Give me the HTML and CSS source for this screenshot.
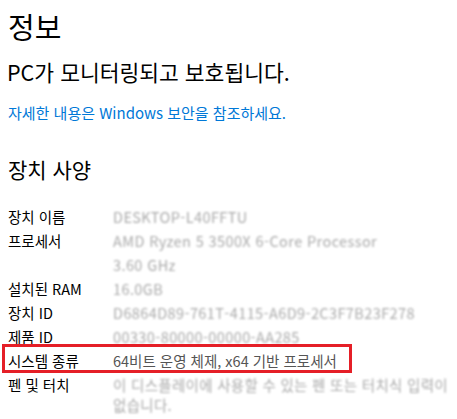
FILE: index.html
```html
<!DOCTYPE html>
<html lang="ko">

<head>
  <meta charset="UTF-8" />
  <meta name="viewport" content="width=device-width, initial-scale=1.0" />
  <title>정보</title>
  <link rel="stylesheet" href="styles.css">
</head>

<body>
  <h1 class="page-title">정보</h1>
  <p class="status">PC가 모니터링되고 보호됩니다.</p>
  <a class="more-link" href="#">자세한 내용은 Windows 보안을 참조하세요.</a>

  <h2 class="section-title">장치 사양</h2>

  <div class="specs">
    <div class="spec-row">
      <span class="spec-label">장치 이름</span>
      <span class="spec-value hidden">DESKTOP-L40FFTU</span>
    </div>
    <div class="spec-row">
      <span class="spec-label">프로세서</span>
      <span class="spec-value hidden">AMD Ryzen 5 3500X 6-Core Processor<br>3.60 GHz</span>
    </div>
    <div class="spec-row">
      <span class="spec-label">설치된 RAM</span>
      <span class="spec-value hidden">16.0GB</span>
    </div>
    <div class="spec-row">
      <span class="spec-label">장치 ID</span>
      <span class="spec-value hidden">D6864D89-761T-4115-A6D9-2C3F7B23F278</span>
    </div>
    <div class="spec-row">
      <span class="spec-label">제품 ID</span>
      <span class="spec-value hidden">00330-80000-00000-AA285</span>
    </div>
    <div class="spec-row highlight">
      <span class="spec-label">시스템 종류</span>
      <span class="spec-value">64비트 운영 체제, x64 기반 프로세서</span>
    </div>
    <div class="spec-row">
      <span class="spec-label">펜 및 터치</span>
      <span class="spec-value hidden wrap">이 디스플레이에 사용할 수 있는 펜 또는 터치식 입력이 없습니다.</span>
    </div>
  </div>
</body>

</html>
```

FILE: styles.css
```css
body {
  margin: 0;
  padding: 0 8px;
  background: #fff;
  color: #000;
  font-family: "Noto Sans CJK KR", "Noto Sans", sans-serif;
}

.page-title {
  margin: 0;
  padding-top: 4px;
  font-size: 29px;
  font-weight: 400;
  line-height: 44px;
}

.status {
  margin: 9px 0 0;
  font-size: 21.5px;
  line-height: 30px;
  margin-left: -1px;
}

.more-link {
  display: block;
  margin-top: 16px;
  font-size: 15px;
  line-height: 20px;
  color: #0078d7;
  text-decoration: none;
}

.section-title {
  margin: 31px 0 0;
  font-size: 21px;
  font-weight: 400;
  line-height: 30px;
}

.specs {
  display: flex;
  flex-direction: column;
  margin-top: 21px;
  width: 441px;
}

.spec-row {
  display: flex;
  position: relative;
  font-size: 14.5px;
  line-height: 24px;
}

.spec-label {
  width: 105px;
  flex-shrink: 0;
}

.spec-value {
  color: #555;
}

.spec-value.hidden {
  color: #aaa;
  letter-spacing: 0.4px;
  filter: blur(1.2px);
}

.spec-value.wrap {
  word-break: break-all;
  letter-spacing: 0.3px;
  line-height: 20px;
  padding-top: 2px;
}

.highlight::after {
  content: "";
  position: absolute;
  left: -6px;
  top: -5px;
  width: 350px;
  height: 29px;
  border: 3px solid #e51f27;
  box-sizing: border-box;
}
```
